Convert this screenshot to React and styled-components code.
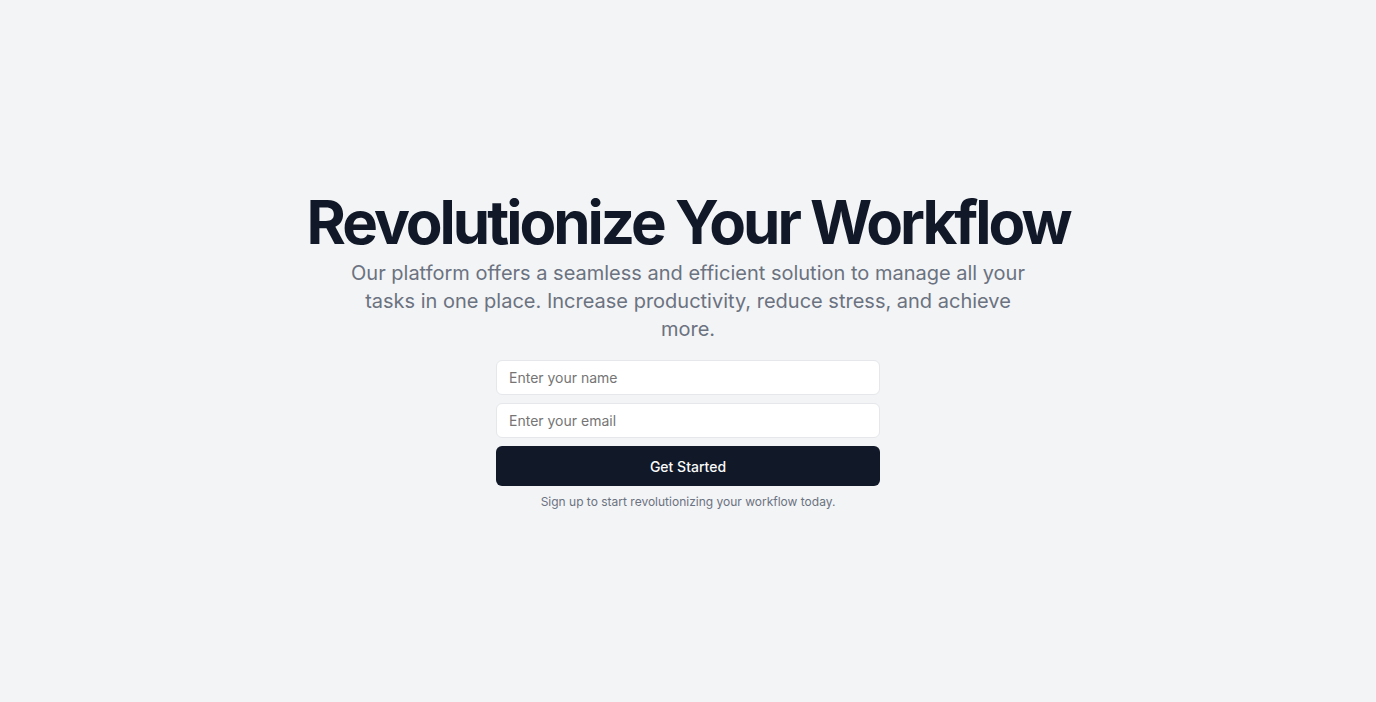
import React from "react";
import styled, { createGlobalStyle } from "styled-components";

const GlobalStyle = createGlobalStyle`
  * {
    box-sizing: border-box;
  }

  body {
    margin: 0;
    background: #f3f4f6;
    font-family: "Inter", "Liberation Sans", sans-serif;
    color: #111827;
  }
`;

const Page = styled.main`
  min-height: 100vh;
  display: flex;
  align-items: center;
  justify-content: center;
  padding: 0 16px;
`;

const Hero = styled.section`
  display: flex;
  flex-direction: column;
  align-items: center;
  text-align: center;
  gap: 8px;
`;

const Title = styled.h1`
  margin: 0;
  font-size: 60px;
  line-height: 1;
  font-weight: 700;
  letter-spacing: -0.05em;
  color: #111827;
`;

const Lead = styled.p`
  margin: -1px 0 0;
  max-width: 700px;
  font-size: 20px;
  line-height: 28px;
  color: #6b7280;
`;

const Form = styled.form`
  width: 384px;
  margin-top: 9px;
  display: flex;
  flex-direction: column;
  gap: 8px;
`;

const Input = styled.input`
  height: 35px;
  width: 100%;
  padding: 0 12px;
  border: 1px solid #e5e7eb;
  border-radius: 6px;
  background: #fff;
  font-family: inherit;
  font-size: 14px;
  color: #111827;

  ::placeholder {
    color: #6b7280;
  }

  &:focus {
    outline: none;
  }
`;

const Button = styled.button`
  height: 40px;
  border: none;
  border-radius: 6px;
  background: #111827;
  color: #f9fafb;
  font-family: inherit;
  font-size: 14px;
  font-weight: 500;
  cursor: pointer;
`;

const Note = styled.p`
  margin: 0;
  font-size: 12px;
  line-height: 16px;
  color: #6b7280;
`;

export default function App() {
  return (
    <>
      <GlobalStyle />
      <Page>
        <Hero>
          <Title>Revolutionize Your Workflow</Title>
          <Lead>
            Our platform offers a seamless and efficient solution to manage all
            your tasks in one place. Increase productivity, reduce stress, and
            achieve more.
          </Lead>
          <Form onSubmit={(e) => e.preventDefault()}>
            <Input type="text" placeholder="Enter your name" />
            <Input type="email" placeholder="Enter your email" />
            <Button type="submit">Get Started</Button>
          </Form>
          <Note>Sign up to start revolutionizing your workflow today.</Note>
        </Hero>
      </Page>
    </>
  );
}
